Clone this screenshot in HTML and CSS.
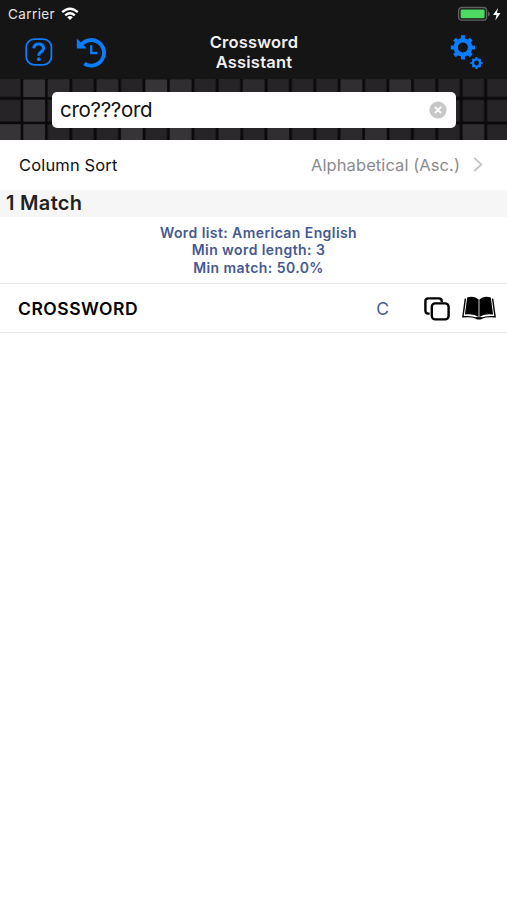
FILE: index.html
```html
<!DOCTYPE html>
<html lang="en">
<head>
<meta charset="utf-8">
<title>Crossword Assistant</title>
<link rel="stylesheet" href="styles.css">
</head>
<body>
<header class="top">
  <div class="status">
    <span class="carrier">Carrier</span>
    <svg class="wifi" width="18" height="14" viewBox="0 0 18 14"><g fill="none" stroke="#fff" stroke-width="2.4"><path d="M1.2 5.1Q9 -1.8 16.8 5.1"/><path d="M4.2 8.3Q9 4.2 13.8 8.3"/></g><path d="M6.2 10.2Q9 8 11.8 10.2L9 13Z" fill="#fff"/></svg>
    <svg class="battery" width="46" height="16" viewBox="0 0 46 16"><rect x="1.6" y="1.5" width="28" height="12.6" rx="3.2" fill="none" stroke="#606260" stroke-width="1.4"/><rect x="3.6" y="3.4" width="24" height="8.8" rx="1.3" fill="#4cd964"/><path d="M31 5.5Q32.8 6 32.8 8T31 10.5Z" fill="#606260"/><path d="M41 2L36 9h3.5l-1.2 5.5L43.5 7H40Z" fill="#fff"/></svg>
  </div>
  <nav class="nav">
    <div class="left">
      <svg width="28" height="28" viewBox="0 0 28 28" fill="none" stroke="#0a7dff"><rect x="1.2" y="1.2" width="25.2" height="25.6" rx="8" stroke-width="1.8"/><path d="M8.8 10.4Q9 6 13.6 6T18.5 10Q18.5 12.5 15.8 14Q13.8 15.2 13.8 17.8" stroke-width="3.1"/><circle cx="13.8" cy="21.2" r="1.9" fill="#0a7dff" stroke="none"/></svg>
      <svg width="31" height="31" viewBox="0 0 31 31" fill="none" stroke="#0a7dff"><path d="M4.5 8.8A12.8 12.8 0 1 1 8.3 26.6" stroke-width="3.9"/><path d="M.8 1.4v10h10Z" fill="#0a7dff" stroke="none"/><path d="M15.2 8.3v7.7h6.2" stroke-width="2.3"/></svg>
    </div>
    <h1>Crossword<br>Assistant</h1>
    <svg class="gears" width="34" height="36" viewBox="0 0 34 36" fill="none" stroke="#0a7dff">
      <circle cx="12.9" cy="13.4" r="7.2" stroke-width="4.4"/>
      <g stroke-width="4"><path d="M12.9 1.3v4M12.9 21.5v4M.8 13.4h4M21 13.4h4"/><path transform="rotate(45 12.9 13.4)" d="M12.9 1.6v4M12.9 21.2v4M1.1 13.4h4M20.7 13.4h4"/></g>
      <circle cx="26.5" cy="29" r="3.6" stroke-width="2.4"/>
      <g stroke-width="2.1"><path d="M26.5 22.9v2.5M26.5 32.6v2.5M20.4 29h2.5M30.1 29h2.5"/><path transform="rotate(45 26.5 29)" d="M26.5 23.2v2.2M26.5 32.6v2.2M20.7 29h2.2M30.1 29h2.2"/></g>
    </svg>
  </nav>
</header>
<section class="search">
  <svg class="tiles" width="507" height="61" viewBox="0 0 507 61">
    <defs><pattern id="grid" x="-2.4" y="-5.2" width="24.4" height="24.6" patternUnits="userSpaceOnUse"><path d="M1.5 1.5h21.4v21.6H1.5Z" fill="#262427"/></pattern></defs>
    <rect width="507" height="61" fill="#0b090b"/>
    <rect width="507" height="61" fill="url(#grid)"/>
    <path fill="#363437" d="M23.4 1h21.5v17H23.4ZM23.4 20.8h21.5v21.7H23.4ZM23.4 45.2h21.5V61H23.4ZM0 45.2h20.6V61H0ZM145.5 1H167v17h-21.5ZM121.1 45.2h21.5V61h-21.5ZM169.9 45.2h21.5V61h-21.5Z"/>
    <path fill="#302e31" d="M169.9 1h21.5v17h-21.5ZM340.7 1h21.5v17h-21.5ZM389.5 1H411v17h-21.5ZM267.5 45.2H289V61h-21.5ZM365.1 45.2h21.5V61h-21.5ZM462.7 45.2h21.5V61h-21.5Z"/>
    <path fill="#2c2a2d" d="M47.8 1h21.5v17H47.8ZM96.7 1h21.5v17H96.7ZM242.9 1h21.5v17h-21.5ZM218.7 45.2h21.5V61h-21.5ZM340.7 45.2h21.5V61h-21.5Z"/>
  </svg>
  <div class="field"><span>cro???ord</span>
    <svg width="18" height="18" viewBox="0 0 18 18"><circle cx="9" cy="9" r="8.6" fill="#c7c7c8"/><path d="M5.9 5.9l6.2 6.2m0-6.2l-6.2 6.2" stroke="#fff" stroke-width="1.9"/></svg>
  </div>
</section>
<main>
  <div class="sort"><span class="sort-label">Column Sort</span><span class="sort-value">Alphabetical (Asc.)</span>
    <svg width="10" height="16" viewBox="0 0 10 16"><path d="M1.2 .8L8.3 7.4l-7.1 6.6" fill="none" stroke="#c4c4c7" stroke-width="1.8"/></svg>
  </div>
  <h2>1 Match</h2>
  <div class="info"><p>Word list: American English</p><p>Min word length: 3</p><p>Min match: 50.0%</p></div>
  <div class="result"><strong>CROSSWORD</strong><span class="letter">C</span>
    <svg class="copy" width="26" height="24" viewBox="0 0 26 24" fill="none" stroke="#000" stroke-width="2.4"><path d="M5.6 16.6H4.4Q1.4 16.6 1.4 13.6V4.4Q1.4 1.4 4.4 1.4H14.8Q17.8 1.4 17.8 4.4V5"/><rect x="7.8" y="6.4" width="16.8" height="16" rx="3.4"/></svg>
    <svg class="book" width="34" height="25" viewBox="0 0 34 25"><path d="M3.4 2.6L.9 20.8q8.7-.8 13.3 1.3h5.6q4.6-2.1 13.3-1.3L30.6 2.6" fill="#fff" stroke="#000" stroke-width="1.4"/><path d="M5.2 1.4Q12.8-.4 16.6 3.5v17.4Q11.2 17 2.9 18.6ZM28.8 1.4Q21.2-.4 17.4 3.5v17.4q5.4-3.9 13.7-2.3Z"/><path d="M14 21.2h6v1.8q-3 1-6 0Z"/></svg>
  </div>
</main>
</body>
</html>
```
FILE: styles.css
```css
* { box-sizing: border-box; }
body { margin: 0; background: #fff; color: #111; font-family: Inter, "Liberation Sans", sans-serif; }
svg { display: block; flex: none; }
h1, h2, p { margin: 0; }
.top { height: 79px; background: #151515; color: #fff; }
.status { height: 27px; padding: 0 4px 0 8px; display: flex; align-items: center; }
.carrier { font-size: 13.5px; color: #e4e4e4; letter-spacing: .4px; }
.wifi { margin-left: 6px; }
.battery { margin-left: auto; }
.nav { height: 52px; display: grid; grid-template-columns: 1fr auto 1fr; padding: 0 23px 0 25px; }
.left { display: flex; gap: 23px; padding-top: 10px; }
.left svg:first-child { margin-top: 1px; }
h1 { padding: 5px 1px 0 0; font-size: 16.5px; line-height: 20px; font-weight: 600; letter-spacing: .2px; text-align: center; color: #f0f0f0; }
.gears { justify-self: end; margin-top: 7px; }
.search { position: relative; height: 61px; padding: 13px 51px 0 52px; }
.tiles { position: absolute; left: 0; top: 0; height: 61px; }
.field { position: relative; height: 36px; background: #fff; border-radius: 5px; display: flex; align-items: center; justify-content: space-between; padding: 0 9px 0 8px; font-size: 20.5px; letter-spacing: -.3px; }
.field span { padding-bottom: 2px; }
.sort { height: 50px; padding: 0 24px 0 19px; display: flex; align-items: center; font-size: 16.5px; letter-spacing: .15px; }
.sort-value { margin-left: auto; margin-right: 13px; color: #8b8b8d; letter-spacing: .08px; }
h2 { height: 27px; padding-left: 6px; background: #f6f6f6; font-size: 20px; line-height: 27px; font-weight: 600; letter-spacing: .3px; color: #222; }
.info { height: 67px; padding: 7px 0 0 10px; border-bottom: 1px solid #e6e6e6; text-align: center; color: #465a91; font-size: 14px; line-height: 17.3px; font-weight: 600; letter-spacing: .42px; }
.result { height: 49px; border-bottom: 1px solid #e6e6e6; padding: 1px 11px 0 18px; display: flex; align-items: center; }
strong { padding-bottom: 1px; font-size: 17.5px; font-weight: 600; letter-spacing: .5px; color: #000; }
.letter { margin-left: auto; font-size: 17.5px; color: #465a91; }
.copy { margin-left: 35px; }
.book { margin-left: 12px; }
```
